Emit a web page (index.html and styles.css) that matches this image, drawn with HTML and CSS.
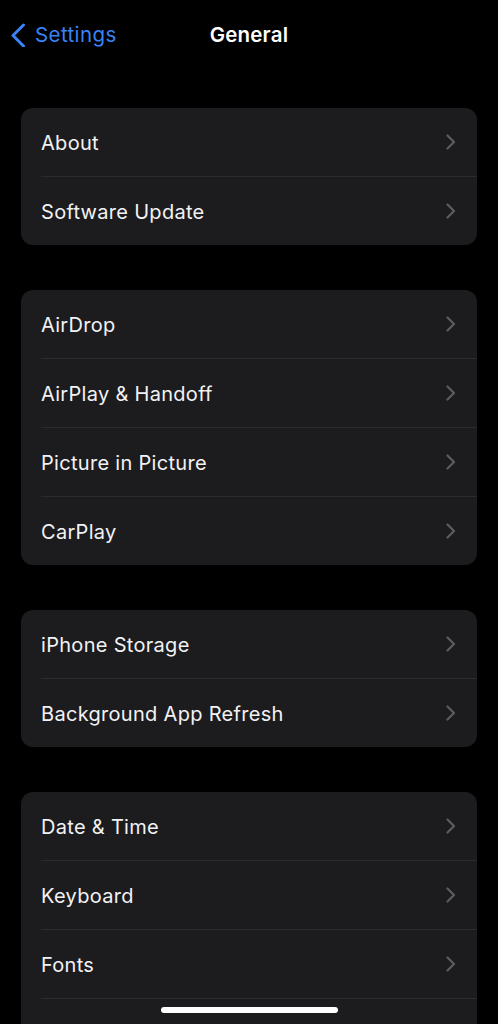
FILE: index.html
```html
<!DOCTYPE html>
<html>
<head>
<meta charset="utf-8">
<link rel="stylesheet" href="styles.css">
</head>
<body>
<div class="screen">
  <header class="nav">
    <div class="back">
      <svg class="back-icon" width="16" height="24" viewBox="0 0 16 24"><path d="M13.5 2 L3 12.5 L13.5 23" fill="none" stroke="#3a82f7" stroke-width="3" stroke-linecap="round" stroke-linejoin="round"/></svg>
      <span class="back-label">Settings</span>
    </div>
    <div class="title">General</div>
  </header>
  <main class="groups">
    <section class="card">
      <div class="row"><span class="label">About</span><svg class="chev" width="10" height="16" viewBox="0 0 10 16"><path d="M1.5 1.5 L8 8 L1.5 14.5" fill="none" stroke="#5c5c61" stroke-width="2.2" stroke-linecap="round" stroke-linejoin="round"/></svg></div>
      <div class="row"><span class="label">Software Update</span><svg class="chev" width="10" height="16" viewBox="0 0 10 16"><path d="M1.5 1.5 L8 8 L1.5 14.5" fill="none" stroke="#5c5c61" stroke-width="2.2" stroke-linecap="round" stroke-linejoin="round"/></svg></div>
    </section>
    <section class="card">
      <div class="row"><span class="label">AirDrop</span><svg class="chev" width="10" height="16" viewBox="0 0 10 16"><path d="M1.5 1.5 L8 8 L1.5 14.5" fill="none" stroke="#5c5c61" stroke-width="2.2" stroke-linecap="round" stroke-linejoin="round"/></svg></div>
      <div class="row"><span class="label">AirPlay &amp; Handoff</span><svg class="chev" width="10" height="16" viewBox="0 0 10 16"><path d="M1.5 1.5 L8 8 L1.5 14.5" fill="none" stroke="#5c5c61" stroke-width="2.2" stroke-linecap="round" stroke-linejoin="round"/></svg></div>
      <div class="row"><span class="label">Picture in Picture</span><svg class="chev" width="10" height="16" viewBox="0 0 10 16"><path d="M1.5 1.5 L8 8 L1.5 14.5" fill="none" stroke="#5c5c61" stroke-width="2.2" stroke-linecap="round" stroke-linejoin="round"/></svg></div>
      <div class="row"><span class="label">CarPlay</span><svg class="chev" width="10" height="16" viewBox="0 0 10 16"><path d="M1.5 1.5 L8 8 L1.5 14.5" fill="none" stroke="#5c5c61" stroke-width="2.2" stroke-linecap="round" stroke-linejoin="round"/></svg></div>
    </section>
    <section class="card">
      <div class="row"><span class="label">iPhone Storage</span><svg class="chev" width="10" height="16" viewBox="0 0 10 16"><path d="M1.5 1.5 L8 8 L1.5 14.5" fill="none" stroke="#5c5c61" stroke-width="2.2" stroke-linecap="round" stroke-linejoin="round"/></svg></div>
      <div class="row"><span class="label">Background App Refresh</span><svg class="chev" width="10" height="16" viewBox="0 0 10 16"><path d="M1.5 1.5 L8 8 L1.5 14.5" fill="none" stroke="#5c5c61" stroke-width="2.2" stroke-linecap="round" stroke-linejoin="round"/></svg></div>
    </section>
    <section class="card">
      <div class="row"><span class="label">Date &amp; Time</span><svg class="chev" width="10" height="16" viewBox="0 0 10 16"><path d="M1.5 1.5 L8 8 L1.5 14.5" fill="none" stroke="#5c5c61" stroke-width="2.2" stroke-linecap="round" stroke-linejoin="round"/></svg></div>
      <div class="row"><span class="label">Keyboard</span><svg class="chev" width="10" height="16" viewBox="0 0 10 16"><path d="M1.5 1.5 L8 8 L1.5 14.5" fill="none" stroke="#5c5c61" stroke-width="2.2" stroke-linecap="round" stroke-linejoin="round"/></svg></div>
      <div class="row"><span class="label">Fonts</span><svg class="chev" width="10" height="16" viewBox="0 0 10 16"><path d="M1.5 1.5 L8 8 L1.5 14.5" fill="none" stroke="#5c5c61" stroke-width="2.2" stroke-linecap="round" stroke-linejoin="round"/></svg></div>
      <div class="row"></div>
    </section>
  </main>
  <div class="home-indicator"></div>
</div>
</body>
</html>
```
FILE: styles.css
```css
html, body {
  margin: 0;
  padding: 0;
  background: #000;
}
.screen {
  width: 498px;
  height: 1024px;
  overflow: hidden;
  position: relative;
  font-family: Inter, "Noto Sans", sans-serif;
  color: #fff;
}
.nav {
  height: 70px;
  padding-bottom: 2px;
  box-sizing: border-box;
  display: flex;
  align-items: center;
  justify-content: center;
  position: relative;
}
.back {
  position: absolute;
  left: 10px;
  top: 22px;
  display: flex;
  align-items: center;
  gap: 9px;
}
.back-icon {
  display: block;
}
.back-label {
  color: #3a82f7;
  font-size: 20.5px;
  letter-spacing: 0.4px;
}
.title {
  font-size: 20.5px;
  font-weight: 600;
  letter-spacing: 0.2px;
}
.groups {
  padding: 38px 21px 0;
  display: flex;
  flex-direction: column;
  gap: 45px;
}
.card {
  background: #1c1c1e;
  border-radius: 12px;
  overflow: hidden;
}
.row {
  height: 68px;
  margin-left: 20px;
  padding-right: 20px;
  display: flex;
  align-items: center;
  justify-content: space-between;
  border-top: 1px solid #2b2b2e;
}
.row:first-child {
  border-top: none;
}
.label {
  font-size: 20px;
  color: #f2f2f5;
  letter-spacing: 0.3px;
  padding-top: 2px;
}
.chev {
  display: block;
  margin-right: 1px;
}
.home-indicator {
  position: absolute;
  left: 161px;
  top: 1007px;
  width: 177px;
  height: 6px;
  border-radius: 3px;
  background: #fff;
}
```
